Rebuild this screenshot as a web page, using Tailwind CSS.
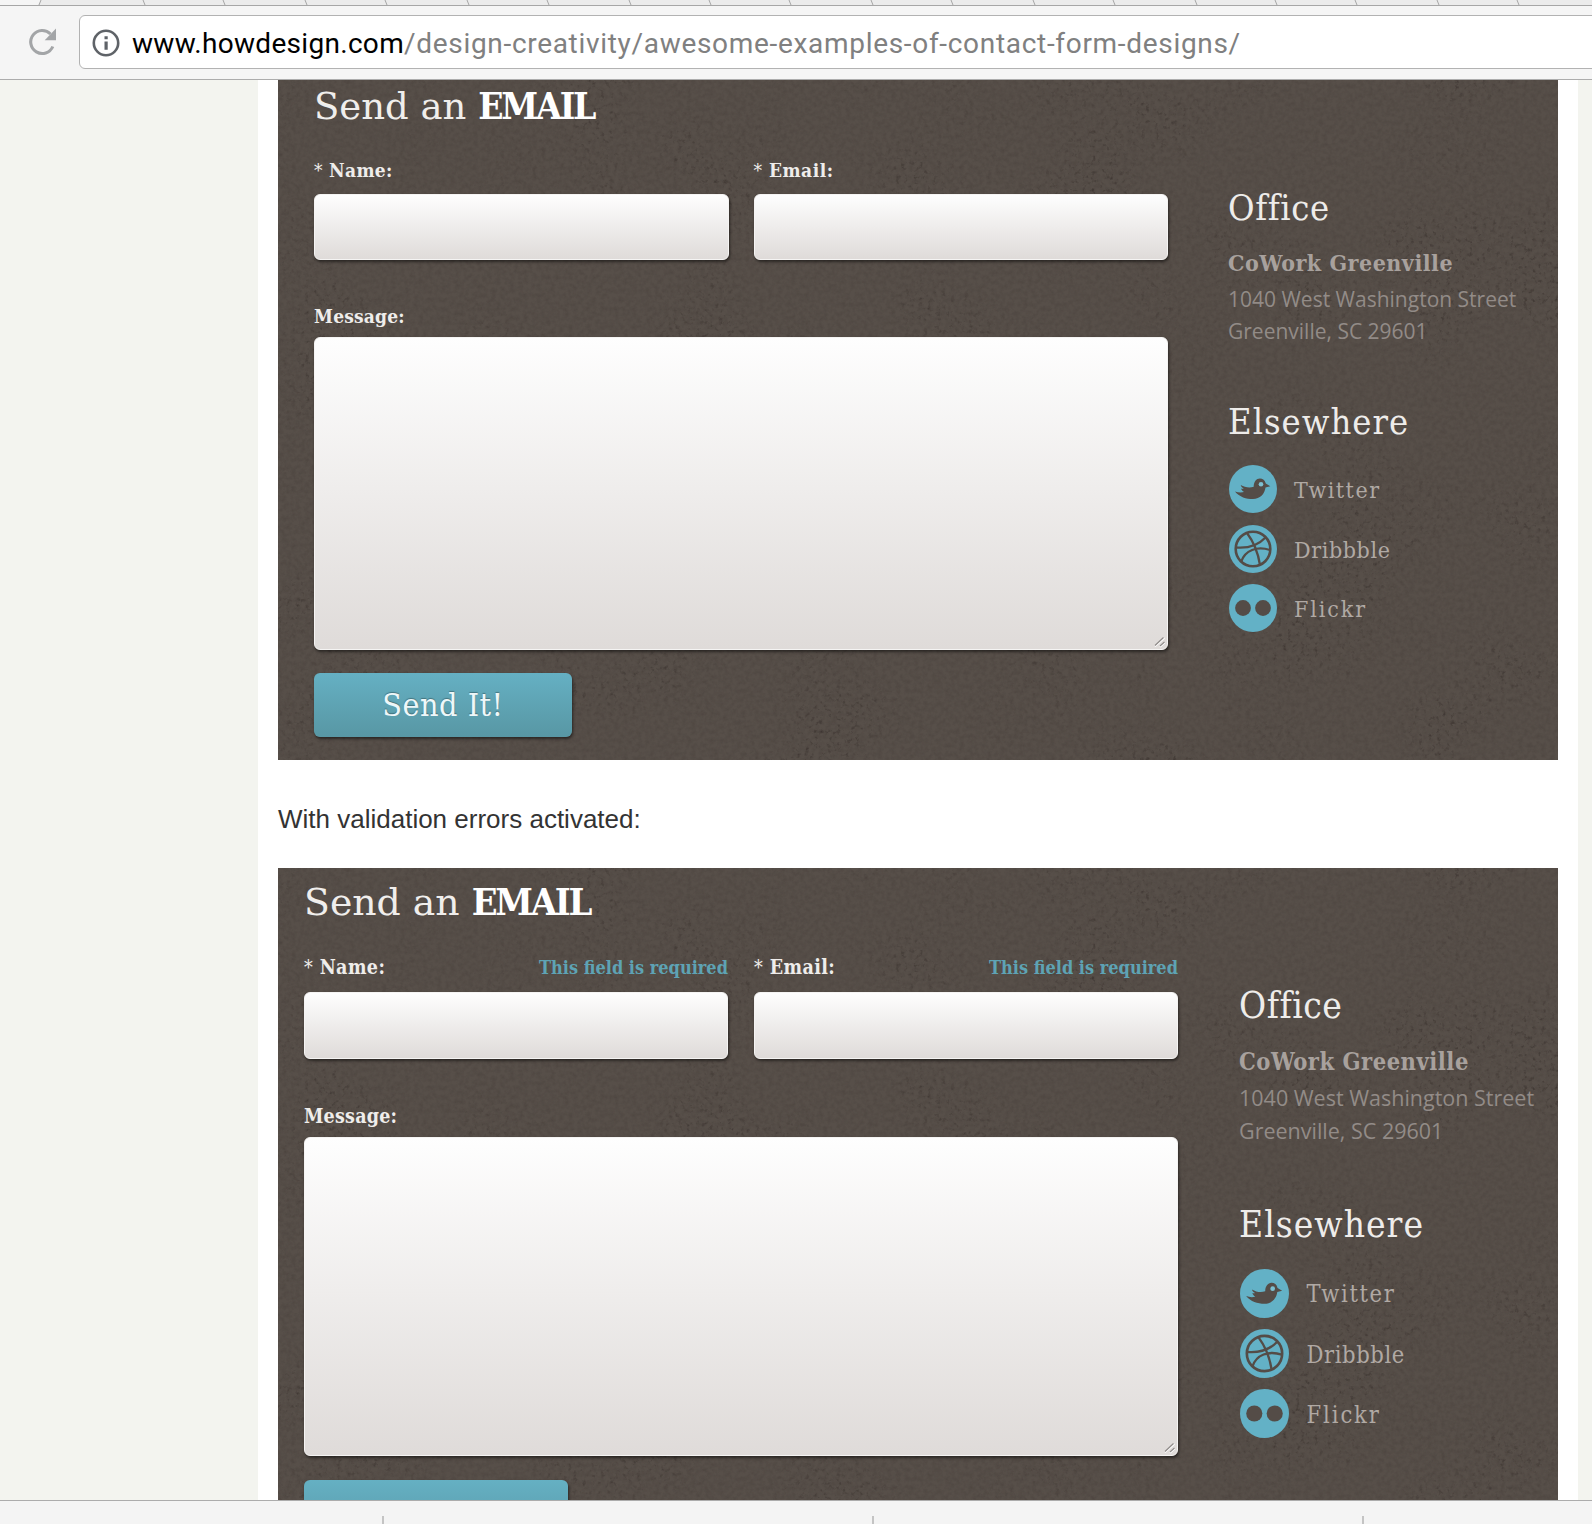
<!DOCTYPE html>
<html lang="en">
<head>
<meta charset="utf-8">
<title>Contact form designs</title>
<script src="https://cdn.jsdelivr.net/npm/@tailwindcss/browser@4"></script>
</head>
<body class="w-[1592px] h-[1524px] overflow-hidden bg-white flex flex-col font-['DejaVu_Serif',serif]">

<svg width="0" height="0" class="absolute">
  <defs>
    <filter id="grain" x="0" y="0" width="100%" height="100%" color-interpolation-filters="sRGB">
      <feTurbulence type="fractalNoise" baseFrequency="0.22" numOctaves="3" seed="4" result="fine"/>
      <feColorMatrix in="fine" type="matrix" values="0 0 0 0 0.16  0 0 0 0 0.13  0 0 0 0 0.12  1.500 0 0 0 -0.87" result="f1"/>
      <feTurbulence type="fractalNoise" baseFrequency="0.008" numOctaves="2" seed="9" result="wide"/>
      <feColorMatrix in="wide" type="matrix" values="0 0 0 0 0  0 0 0 0 0  0 0 0 0 0  0 4 0 0 -1.8" result="w1"/>
      <feComposite in="f1" in2="w1" operator="in" result="patch"/>
      <feColorMatrix in="fine" type="matrix" values="0 0 0 0 0.16  0 0 0 0 0.13  0 0 0 0 0.12  0 0.3 0 0 -0.11" result="f2"/>
      <feMerge><feMergeNode in="f2"/><feMergeNode in="patch"/></feMerge>
    </filter>
    <symbol id="twitter" viewBox="0 0 48 48">
      <circle cx="24" cy="24" r="24" fill="#63b1c6"/>
      <path fill="#544c47" d="M6 26.500c3 1.200 6.500 1.400 9 .6-1.500-1-2.500-2.500-3-3.700 1 .4 2 .3 2.700 0-1.700-.8-2.700-2-3-3.400 4 2.300 8.500 3.300 13 1.800 0-4.800 2.600-8.300 6.200-8.300 2.900 0 5 1.500 5.900 5l4.500 2.800-4.800 1.300c-.8 6.500-5.500 11.500-12.500 11.500-6.800 0-13.500-2-18-7.600z"/>
      <circle cx="32" cy="19.300" r="2.300" fill="#7cc0d1"/>
    </symbol>
    <symbol id="dribbble" viewBox="0 0 48 48">
      <circle cx="24" cy="24" r="24" fill="#63b1c6"/>
      <g fill="none" stroke="#544c47" stroke-width="2.300">
        <circle cx="24" cy="24" r="17.300" stroke-width="2.600"/>
        <path d="M18 8c6 8 11 19 13 32"/>
        <path d="M7 22.500c12 1 22-2 29.500-10"/>
        <path d="M12 37c4-12 16-16 29-12"/>
      </g>
    </symbol>
    <symbol id="flickr" viewBox="0 0 48 48">
      <circle cx="24" cy="24" r="24" fill="#63b1c6"/>
      <circle cx="14" cy="24" r="7.900" fill="#544c47"/>
      <circle cx="34" cy="24" r="7.900" fill="#544c47"/>
    </symbol>
    <symbol id="grip" viewBox="0 0 12 12">
      <path d="M1 10.500 10.500 2M6 11l5-4.500" stroke="#fff" stroke-width="1.500" fill="none"/>
      <path d="M1 9.500 9.500 1.500M6 10l4.500-4" stroke="#8f8b89" stroke-width="1.200" fill="none"/>
    </symbol>
  </defs>
</svg>

<!-- browser chrome -->
<div class="h-[6px] shrink-0 bg-[#ebebeb] border-b border-[#a6a6a6]">
  <svg width="1592" height="5" class="block">
    <path d="M0 0H41L38 5H0z" fill="#f5f5f5"/>
    <path stroke="#a6a6a6" fill="none" d="M41 0 39 5M143 0l2 5M223 0l2 5M305 0l2 5M385 0l2 5M467 0l2 5M547 0l2 5M629 0l2 5M709 0l2 5M789 0l2 5M871 0l2 5M951 0l2 5M1033 0l2 5M1113 0l2 5M1195 0l2 5M1275 0l2 5M1355 0l2 5M1437 0l2 5M1517 0l2 5"/>
  </svg>
</div>
<div class="h-[74px] shrink-0 bg-[#f5f5f5] border-b border-[#acacac] flex items-start pt-[9px]">
  <svg width="30" height="30" viewBox="0 0 30 30" class="ml-[28px] mt-[12px] shrink-0">
    <path d="M24.800 19.500A11.500 11.500 0 1 1 22.500 7" fill="none" stroke="#a3a5a7" stroke-width="3.100"/>
    <path d="M28 1.500v11.800H16.700z" fill="#a3a5a7"/>
  </svg>
  <div class="ml-[21px] w-[1540px] shrink-0 h-[54px] bg-white border border-[#b2b2b2] rounded-[6px] flex items-center">
    <svg width="28" height="28" viewBox="0 0 28 28" class="ml-[12px] mt-[1px] shrink-0">
      <circle cx="14" cy="14" r="12.200" fill="none" stroke="#5f6368" stroke-width="2.600"/>
      <path d="M12.500 12.500h3.200v8.200h-3.200zM12.500 7.300h3.200v3h-3.200z" fill="#5f6368"/>
    </svg>
    <div class="ml-[12px] pt-[3px] whitespace-nowrap font-['Roboto',sans-serif] text-[28px] leading-[40px] tracking-[0.690px] text-[#808080]"><span class="text-black tracking-[0.300px]">www.howdesign.com</span>/design-creativity/awesome-examples-of-contact-form-designs/</div>
  </div>
</div>

<!-- page -->
<div class="h-[1420px] shrink-0 overflow-hidden bg-[#f3f4ef] pl-[258px] pr-[14px]">
  <main class="bg-white px-[20px] h-[1420px]">

    <section class="relative isolate h-[680px] bg-[#574f49] overflow-hidden flex pl-[36px]">
      <svg class="absolute inset-0 -z-10" width="1280" height="680"><rect width="1280" height="680" filter="url(#grain)"/></svg>
      <form class="w-[854px] shrink-0 pt-[2px]">
        <h2 class="h-[48px] leading-[48px] text-[37px] text-[#f0eeec] whitespace-nowrap">Send an <b class="font-stretch-condensed tracking-[-2.200px] text-white">EMAIL</b></h2>
        <div class="mt-[28px] flex gap-[25px]">
          <label class="w-[415px] text-[19px] leading-[24px] tracking-[0.300px] font-bold font-stretch-condensed text-[#efedeb]"><span class="font-normal">*</span> Name:
            <input class="mt-[12px] block w-full h-[66px] rounded-[6px] border border-[#f5f4f3] bg-linear-to-b from-[#fefefe] to-[#dfdbd9] shadow-[1px_2px_3px_rgba(0,0,0,0.5)]"></label>
          <label class="w-[415px] text-[19px] leading-[24px] tracking-[0.500px] font-bold font-stretch-condensed text-[#efedeb]"><span class="font-normal">*</span> Email:
            <input class="mt-[12px] block w-full h-[66px] rounded-[6px] border border-[#f5f4f3] bg-linear-to-b from-[#fefefe] to-[#dfdbd9] shadow-[1px_2px_3px_rgba(0,0,0,0.5)]"></label>
        </div>
        <div class="mt-[44px] text-[19px] leading-[24px] tracking-[0.200px] font-bold font-stretch-condensed text-[#efedeb]">Message:</div>
        <div class="relative mt-[9px] h-[313px] rounded-[6px] border border-[#f5f4f3] bg-linear-to-b from-[#fefefe] to-[#dfdbd9] shadow-[1px_2px_3px_rgba(0,0,0,0.5)]">
          <svg class="absolute right-[1px] bottom-[1px]" width="12" height="12"><use href="#grip"/></svg>
        </div>
        <button type="button" class="mt-[23px] block w-[258px] h-[64px] rounded-[6px] bg-linear-to-b from-[#65b0c3] to-[#5897a4] shadow-[1px_2px_3px_rgba(0,0,0,0.5)] text-[32px] leading-[64px] font-stretch-condensed tracking-[0.500px] text-[#eef7f9] text-shadow-[0_-1px_1px_rgba(0,0,0,0.3)]">Send It!</button>
      </form>
      <aside class="ml-[60px] pt-[108px] whitespace-nowrap text-[#b0a9a4]">
        <h3 class="h-[40px] leading-[40px] text-[36px] font-stretch-condensed tracking-[0.600px] text-[#eeecea]">Office</h3>
        <div class="mt-[19px] h-[32px] leading-[32px] text-[23px] font-bold font-stretch-condensed tracking-[0.500px] text-[#a8a19d]">CoWork Greenville</div>
        <div class="mt-[4px] leading-[32px] text-[21px] font-['Open_Sans',sans-serif] text-[#928b87]">1040 West Washington Street<br>Greenville, SC 29601</div>
        <h3 class="mt-[55px] h-[40px] leading-[40px] text-[36px] font-stretch-condensed tracking-[1px] text-[#eeecea]">Elsewhere</h3>
        <ul class="ml-[1px] mt-[23px] flex flex-col gap-[11.500px] text-[23px] leading-[48px] font-stretch-condensed">
          <li class="flex h-[48px] gap-[17px]"><svg width="48" height="48"><use href="#twitter"/></svg><span class="pt-[1px] tracking-[1.500px]">Twitter</span></li>
          <li class="flex h-[48px] gap-[17px]"><svg width="48" height="48"><use href="#dribbble"/></svg><span class="pt-[1px] tracking-[0.600px]">Dribbble</span></li>
          <li class="flex h-[48px] gap-[17px]"><svg width="48" height="48"><use href="#flickr"/></svg><span class="pt-[1px] tracking-[1.900px]">Flickr</span></li>
        </ul>
      </aside>
    </section>

    <p class="h-[108px] pt-[39px] leading-[40px] text-[26px] font-['Liberation_Sans',sans-serif] text-[#333]">With validation errors activated:</p>

    <section class="relative isolate h-[632px] bg-[#574f49] overflow-hidden flex pl-[26px]">
      <svg class="absolute inset-0 -z-10" width="1280" height="680"><rect width="1280" height="680" filter="url(#grain)"/></svg>
      <form class="w-[874px] shrink-0 pt-[10px]">
        <h2 class="h-[48px] leading-[48px] text-[37.800px] text-[#f0eeec] whitespace-nowrap">Send an <b class="font-stretch-condensed tracking-[-2.300px] text-white">EMAIL</b></h2>
        <div class="mt-[30px] flex gap-[26px] text-[19.500px] leading-[24px] tracking-[0.400px] font-bold font-stretch-condensed text-[#efedeb]">
          <div class="w-[424px]">
            <div class="flex justify-between"><span><span class="font-normal">*</span> Name:</span><span class="text-[#5ea3b4] text-[18px] tracking-normal">This field is required</span></div>
            <input class="mt-[12px] block w-full h-[67px] rounded-[6px] border border-[#f5f4f3] bg-linear-to-b from-[#fefefe] to-[#dfdbd9] shadow-[1px_2px_3px_rgba(0,0,0,0.5)]">
          </div>
          <div class="w-[424px]">
            <div class="flex justify-between"><span><span class="font-normal">*</span> Email:</span><span class="text-[#5ea3b4] text-[18px] tracking-normal">This field is required</span></div>
            <input class="mt-[12px] block w-full h-[67px] rounded-[6px] border border-[#f5f4f3] bg-linear-to-b from-[#fefefe] to-[#dfdbd9] shadow-[1px_2px_3px_rgba(0,0,0,0.5)]">
          </div>
        </div>
        <div class="mt-[46px] text-[19.500px] leading-[24px] tracking-[0.200px] font-bold font-stretch-condensed text-[#efedeb]">Message:</div>
        <div class="relative mt-[8px] h-[319px] rounded-[6px] border border-[#f5f4f3] bg-linear-to-b from-[#fefefe] to-[#dfdbd9] shadow-[1px_2px_3px_rgba(0,0,0,0.5)]">
          <svg class="absolute right-[1px] bottom-[1px]" width="12" height="12"><use href="#grip"/></svg>
        </div>
        <button type="button" class="mt-[24px] block w-[264px] h-[66px] rounded-[6px] bg-linear-to-b from-[#65b0c3] to-[#5897a4] shadow-[1px_2px_3px_rgba(0,0,0,0.5)] text-[32.500px] leading-[66px] font-stretch-condensed tracking-[0.600px] text-[#eef7f9] text-shadow-[0_-1px_1px_rgba(0,0,0,0.3)]"><span class="relative top-[2px]">Send It!</span></button>
      </form>
      <aside class="ml-[61px] pt-[118px] whitespace-nowrap text-[#b0a9a4]">
        <h3 class="h-[40px] leading-[40px] text-[36.800px] font-stretch-condensed tracking-[0.500px] text-[#eeecea]">Office</h3>
        <div class="mt-[20px] h-[32px] leading-[32px] text-[23.500px] font-bold font-stretch-condensed tracking-[0.500px] text-[#a8a19d]">CoWork Greenville</div>
        <div class="mt-[3px] leading-[33px] text-[21.500px] font-['Open_Sans',sans-serif] text-[#928b87]">1040 West Washington Street<br>Greenville, SC 29601</div>
        <h3 class="mt-[58px] h-[40px] leading-[40px] text-[36.800px] font-stretch-condensed tracking-[1px] text-[#eeecea]">Elsewhere</h3>
        <ul class="ml-[0.500px] mt-[24px] flex flex-col gap-[11px] text-[23.500px] leading-[49px] font-stretch-condensed">
          <li class="flex h-[49px] gap-[18px]"><svg width="49" height="49"><use href="#twitter"/></svg><span class="pt-[1px] tracking-[1.600px]">Twitter</span></li>
          <li class="flex h-[49px] gap-[18px]"><svg width="49" height="49"><use href="#dribbble"/></svg><span class="pt-[2px] tracking-[0.600px]">Dribbble</span></li>
          <li class="flex h-[49px] gap-[18px]"><svg width="49" height="49"><use href="#flickr"/></svg><span class="pt-[2px] tracking-[1.900px]">Flickr</span></li>
        </ul>
      </aside>
    </section>
  </main>
</div>

<!-- downloads shelf -->
<footer class="h-[24px] shrink-0 bg-[#f4f4f4] border-t border-[#acacac] pt-[15px] pl-[382px] flex gap-[488px]">
  <i class="w-[2px] h-[8px] bg-[#c4c4c4]"></i>
  <i class="w-[2px] h-[8px] bg-[#c4c4c4]"></i>
  <i class="w-[2px] h-[8px] bg-[#c4c4c4]"></i>
</footer>
</body>
</html>
